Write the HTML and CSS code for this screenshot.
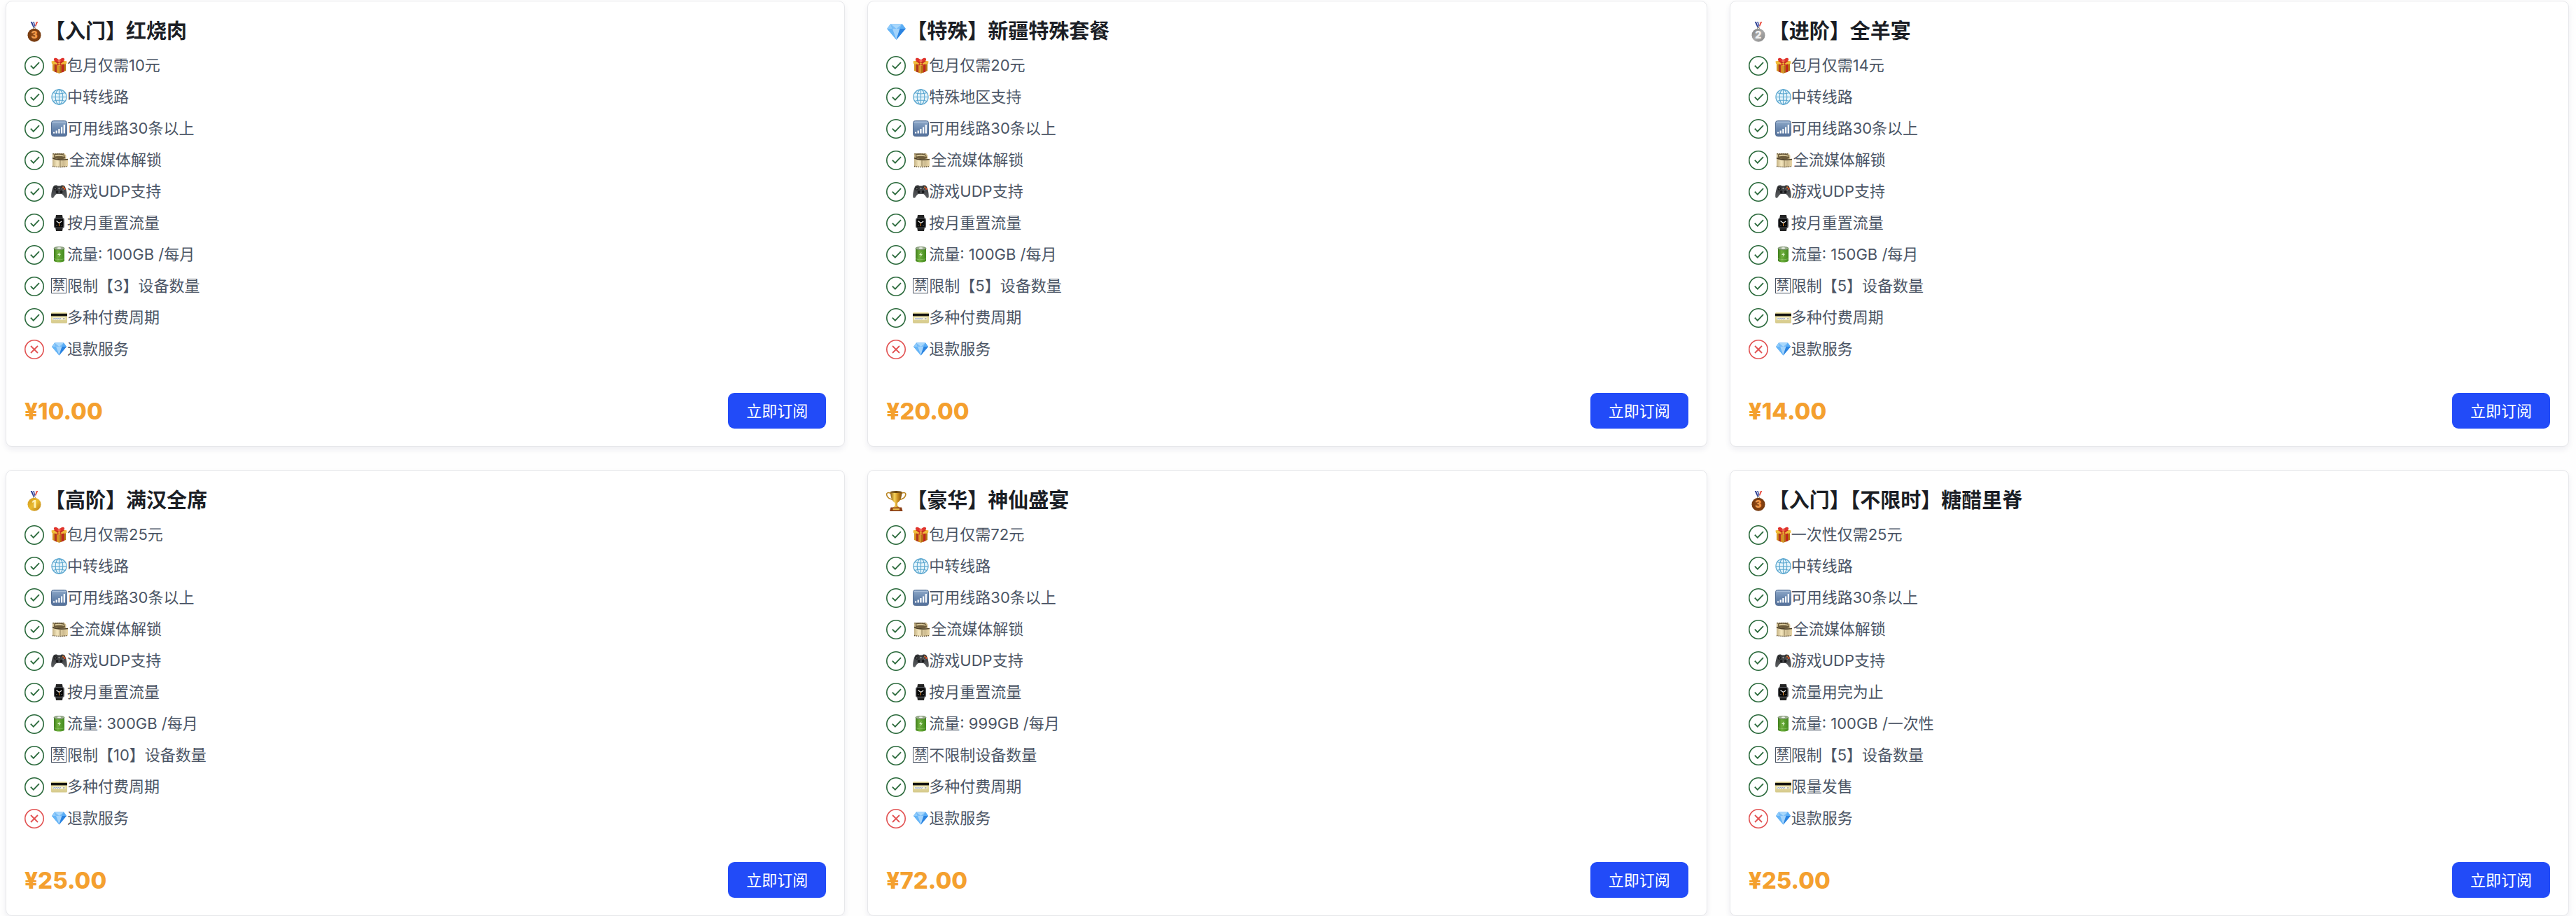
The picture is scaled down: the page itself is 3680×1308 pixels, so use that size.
FILE: index.html
```
<!DOCTYPE html>
<html lang="zh-CN">
<head>
<meta charset="utf-8">
<meta name="viewport" content="width=device-width, initial-scale=1">
<title>订阅套餐</title>
<link rel="stylesheet" href="styles.css">
</head>
<body>
<svg class="sprite" aria-hidden="true">
  <defs>
    <linearGradient id="g-red" x2="1"><stop offset="0" stop-color="#a3341d"/><stop offset=".5" stop-color="#d63a2a"/><stop offset="1" stop-color="#b81f1c"/></linearGradient>
    <linearGradient id="g-signal" x2="0" y2="1"><stop offset="0" stop-color="#8fa9c9"/><stop offset=".5" stop-color="#6b89b0"/><stop offset="1" stop-color="#54709a"/></linearGradient>
    <linearGradient id="g-film" x2="1"><stop offset="0" stop-color="#c3b184"/><stop offset=".3" stop-color="#f4e6bd"/><stop offset=".7" stop-color="#cdbb90"/><stop offset="1" stop-color="#e9d6a7"/></linearGradient>
    <linearGradient id="g-pad" x2="0" y2="1"><stop offset="0" stop-color="#2f3133"/><stop offset="1" stop-color="#5d6063"/></linearGradient>
    <linearGradient id="g-battery" x2="1"><stop offset="0" stop-color="#3f7d1c"/><stop offset=".35" stop-color="#6fb03d"/><stop offset="1" stop-color="#438a1e"/></linearGradient>
    <linearGradient id="g-card" x2="0" y2="1"><stop offset="0" stop-color="#f1e7a8"/><stop offset="1" stop-color="#d5c98c"/></linearGradient>
    <linearGradient id="g-cup" x2="1"><stop offset="0" stop-color="#8a5a12"/><stop offset=".35" stop-color="#f6d35a"/><stop offset=".65" stop-color="#c98d1f"/><stop offset="1" stop-color="#7b4d10"/></linearGradient>
    <radialGradient id="g-bronze"><stop offset="0" stop-color="#9b4f16"/><stop offset="1" stop-color="#74390f"/></radialGradient>
    <linearGradient id="g-silver" x2="1" y2="1"><stop offset="0" stop-color="#7d7d7d"/><stop offset=".5" stop-color="#a9a9a9"/><stop offset="1" stop-color="#858585"/></linearGradient>
    <linearGradient id="g-gold" x2="1" y2="1"><stop offset="0" stop-color="#cf9418"/><stop offset=".5" stop-color="#e9bb30"/><stop offset="1" stop-color="#b97c12"/></linearGradient>
  </defs>
  <symbol id="yes" viewBox="0 0 28 28"><g fill="none" stroke="currentColor"><circle cx="14" cy="14" r="13.200" stroke-width="1.600"/><path d="M8.800 13.600l4 4 8.200-8.400" stroke-width="1.800"/></g></symbol>
  <symbol id="no" viewBox="0 0 28 28"><g fill="none" stroke="currentColor"><circle cx="14" cy="14" r="13.200" stroke-width="1.600"/><path d="M9 9l10 10M19 9L9 19" stroke-width="1.800"/></g></symbol>
  <symbol id="gift" viewBox="0 0 23 23"><path d="M2 8l9.500 3v12L2 19z" fill="#d9971f"/><path d="M21 8l-9.500 3v12L21 19z" fill="#b87412"/><path d="M.5 5.500L11 3l11.500 2.500-.4 3.500-10.600 3L1 9z" fill="#f0bb3a"/><path d="M4.800 9.500l3.400 1v11.200l-3.400-1.300zM18.200 9.500l-3.400 1v11.200l3.400-1.300z" fill="url(#g-red)"/><path d="M4 5l9 6.500 2.600-.8L7 4zM19 5l-9 6.500-2.600-.8L16 4z" fill="#c72b22"/><path d="M11.500 4.500C9 0 5 0 4 2c-.8 2 2 4.500 7.500 3.500C17 6.500 19.800 4 19 2c-1-2-5-2-7.500 2.500z" fill="#e0332c"/><circle cx="11.500" cy="4.300" r="1.900" fill="#f0645a"/></symbol>
  <symbol id="globe" viewBox="0 0 23 23"><circle cx="11.500" cy="11.500" r="10.700" fill="#e4f4fb"/><g fill="none" stroke="#5aa6cf" stroke-width="1.100"><circle cx="11.500" cy="11.500" r="10.600"/><ellipse cx="11.500" cy="11.500" rx="5.300" ry="10.600"/><path d="M11.500 1v21M1 11.500h21M3 5.500c5 1.700 12 1.700 17 0M3 17.500c5-1.700 12-1.700 17 0"/></g></symbol>
  <symbol id="signal" viewBox="0 0 23 23"><rect x=".5" y=".5" width="22" height="22" rx="3" fill="url(#g-signal)" stroke="#536d92"/><path d="M1.500 2.500h20" stroke="#b7cbe2" opacity=".7"/><path d="M3 18.500v-2h2.200v2zM6.600 18.500v-4h2.200v4zM10.300 18.500v-6.500h2.200v6.500zM14 18.500v-9h2.200v9zM17.700 18.500V6h2.200v12.500z" fill="#fff"/></symbol>
  <symbol id="film" viewBox="0 0 26 23"><path d="M2 2h17l2.500 3v6H24v9.500c-6 1.500-16 1.500-22 0z" fill="url(#g-film)"/><path d="M4 3.500c4-2 13-1.500 15 1l1.500 4.500c-5 2-13 1.500-16.500-1z" fill="#6d5c3b"/><path d="M5 4.500c4-1.400 10-1 13 .6l.8 1.600C14 5.500 9 5.500 5.500 6.500z" fill="#d8c798"/><path d="M2 8.500c5 3 14 3 22 2" stroke="#4e4029" stroke-width="1.600" fill="none"/><path d="M2.500 2.700h16M2 20.500c7 1.300 15 1.300 22 0" stroke="#594a2e" stroke-width="1.400" stroke-dasharray="1.400 1.400" fill="none"/><path d="M13 11.500v9" stroke="#8a7850"/></symbol>
  <symbol id="gamepad" viewBox="0 0 23 23"><path d="M4.500 3c2-1 4-.5 5 .5h4c1-1 3-1.500 5-.5 2 .8 4.500 9.500 4.300 15.500 0 2.500-2.300 3-3.500 1.200C17.500 17 16 15 14.500 15h-6c-1.500 0-3 2-4.800 4.700C2.500 21.500.2 21 .2 18.500 0 13 2.500 3.800 4.500 3z" fill="url(#g-pad)"/><g fill="#17181a"><circle cx="5.800" cy="7.500" r="2.200"/><circle cx="14.600" cy="12" r="1.900"/><circle cx="8.600" cy="12" r="1.900"/></g><circle cx="5.800" cy="7.500" r="1" fill="#777"/><circle cx="11.500" cy="7" r="1.200" fill="#999"/><circle cx="17.200" cy="5.500" r="1.200" fill="#d0742d"/><circle cx="19.300" cy="7.600" r="1.300" fill="#ee4a22"/><circle cx="15.300" cy="7.600" r=".9" fill="#777"/><circle cx="17.200" cy="9.500" r=".9" fill="#777"/></symbol>
  <symbol id="watch" viewBox="0 0 23 23"><path d="M7 0h9l1 6H6zM6 17h11l-1 6H7z" fill="#242424"/><rect x="4" y="4" width="15" height="15" rx="3.200" fill="#54565a"/><rect x="5.300" y="5.200" width="12" height="12.600" rx="1.800" fill="#080808"/><path d="M7.500 8.500l4 3 3.700-2.500" fill="none" stroke="#f3f3f3" stroke-width="1.200"/><path d="M11.500 11.500V16" stroke="#e88a25"/><path d="M7.500 14.500h.9M14.600 14.500h.9" stroke="#999"/></symbol>
  <symbol id="battery" viewBox="0 0 23 23"><path d="M4 2.500v18c2 2.700 13 2.700 15 0v-18z" fill="url(#g-battery)"/><ellipse cx="11.500" cy="2.600" rx="7.500" ry="2.200" fill="#9fb193" stroke="#5d7a4d" stroke-width=".7"/><ellipse cx="11.500" cy="2.200" rx="2.700" ry="1" fill="#f0f3ee"/><path d="M12.500 8l-3.500 4h2.400l-.7 3 3.400-4.200h-2.300z" fill="#d9f0c4"/><path d="M4.500 17.500c3 1.500 11 1.500 14 0" fill="none" stroke="#9ccc78" stroke-dasharray="1 1"/></symbol>
  <symbol id="credit" viewBox="0 0 23 23"><rect y="4" width="23" height="15.500" rx="1.500" fill="url(#g-card)"/><path d="M0 5.800h23v3.600H0z" fill="#151411"/><path d="M2 11.300h18.500v3.400H2z" fill="#f4f2df"/><path d="M3 13.500l1.500-1 1.500 1 1.500-1 1.500 1 1.500-1 1.500 1 2-1" fill="none" stroke="#6c86cc" stroke-width=".9"/><path d="M17 13h2.500" stroke="#777"/></symbol>
  <symbol id="gem" viewBox="0 0 23 23"><path d="M5 2.500h13l4 5.500-10.500 12.500L1 8z" fill="#4ba3f2"/><path d="M5 2.500L1 8h6z" fill="#8fcbfa"/><path d="M5 2.500h13L15.500 8H7z" fill="#79bdf8"/><path d="M5 2.500L11.500 8 18 2.500z" fill="#a9d8fc"/><path d="M18 2.500L22 8h-6.500z" fill="#5baef5"/><path d="M1 8h6l4.500 12.500z" fill="#66b5f7"/><path d="M7 8h8.500l-4 12.500z" fill="#a3d3fb"/><path d="M15.500 8H22L11.500 20.500z" fill="#2b83e0"/></symbol>
  <symbol id="ribbon" viewBox="0 0 29 29"><path d="M19.300 0h-4.600l-3 8.500h3.600z" fill="#fff"/><path d="M19.300 0h-2.200l-3.300 8.500h1.600z" fill="#e8483a"/><path d="M15.900 0h-1.400l-1.700 5 .8 1.500z" fill="#dfe3ee"/><path d="M8.700 0h4.600l3 8.500h-3.600z" fill="#fff"/><path d="M8.700 0h2.200l3.300 8.500h-1.600z" fill="#24388f"/><path d="M12 0h1.500l2 6-.9 1.500z" fill="#33479e"/><circle cx="14" cy="9.700" r="1.500" fill="none" stroke="#8c8473"/></symbol>
  <symbol id="bronze" viewBox="0 0 29 29"><use href="#ribbon"/><circle cx="14" cy="19.200" r="9.500" fill="url(#g-bronze)"/></symbol>
  <symbol id="silver" viewBox="0 0 29 29"><use href="#ribbon"/><circle cx="14" cy="19.200" r="9.500" fill="url(#g-silver)"/></symbol>
  <symbol id="gold" viewBox="0 0 29 29"><use href="#ribbon"/><circle cx="14" cy="19.200" r="9.500" fill="url(#g-gold)"/></symbol>
  <symbol id="trophy" viewBox="0 0 29 29"><path d="M7 3.500C2 1.500 0 3 .8 6c.8 3.500 4 5.500 8.500 6.500M21.500 3.500c5-2 7-.5 6.200 2.500-.8 3.500-4 5.500-8.500 6.500" fill="none" stroke="#b9831d" stroke-width="1.500"/><path d="M6 1h16.500c0 8-2.500 14-6.500 16v4l3 3H9.500l3-3v-4C8.500 15 6 9 6 1z" fill="url(#g-cup)"/><ellipse cx="14.200" cy="1.500" rx="8.200" ry="1.400" fill="#68450f"/><path d="M6.500 23.500h15.500l1.500 5.500H5z" fill="#8c3f17"/><path d="M9.500 25h9.500v2.300H9.500z" fill="#e9bd4c"/></symbol>
</svg>

<main class="plans">
  <article class="plan">
    <h2 class="plan-title"><span class="badge bronze"><svg><use href="#bronze"/></svg><b>3</b></span>【入门】红烧肉</h2>
    <ul class="features">
      <li><svg class="mark"><use href="#yes"/></svg><span><svg class="emoji"><use href="#gift"/></svg>包月仅需10元</span></li>
      <li><svg class="mark"><use href="#yes"/></svg><span><svg class="emoji"><use href="#globe"/></svg>中转线路</span></li>
      <li><svg class="mark"><use href="#yes"/></svg><span><svg class="emoji"><use href="#signal"/></svg>可用线路30条以上</span></li>
      <li><svg class="mark"><use href="#yes"/></svg><span><svg class="emoji wide"><use href="#film"/></svg>全流媒体解锁</span></li>
      <li><svg class="mark"><use href="#yes"/></svg><span><svg class="emoji"><use href="#gamepad"/></svg>游戏UDP支持</span></li>
      <li><svg class="mark"><use href="#yes"/></svg><span><svg class="emoji"><use href="#watch"/></svg>按月重置流量</span></li>
      <li><svg class="mark"><use href="#yes"/></svg><span><svg class="emoji"><use href="#battery"/></svg>流量: 100GB /每月</span></li>
      <li><svg class="mark"><use href="#yes"/></svg><span><b class="boxed">禁</b>限制【3】设备数量</span></li>
      <li><svg class="mark"><use href="#yes"/></svg><span><svg class="emoji"><use href="#credit"/></svg>多种付费周期</span></li>
      <li><svg class="mark off"><use href="#no"/></svg><span><svg class="emoji"><use href="#gem"/></svg>退款服务</span></li>
    </ul>
    <footer class="plan-footer"><strong class="price">¥10.00</strong><button class="subscribe" type="button">立即订阅</button></footer>
  </article>

  <article class="plan">
    <h2 class="plan-title"><span class="badge"><svg><use href="#gem"/></svg></span>【特殊】新疆特殊套餐</h2>
    <ul class="features">
      <li><svg class="mark"><use href="#yes"/></svg><span><svg class="emoji"><use href="#gift"/></svg>包月仅需20元</span></li>
      <li><svg class="mark"><use href="#yes"/></svg><span><svg class="emoji"><use href="#globe"/></svg>特殊地区支持</span></li>
      <li><svg class="mark"><use href="#yes"/></svg><span><svg class="emoji"><use href="#signal"/></svg>可用线路30条以上</span></li>
      <li><svg class="mark"><use href="#yes"/></svg><span><svg class="emoji wide"><use href="#film"/></svg>全流媒体解锁</span></li>
      <li><svg class="mark"><use href="#yes"/></svg><span><svg class="emoji"><use href="#gamepad"/></svg>游戏UDP支持</span></li>
      <li><svg class="mark"><use href="#yes"/></svg><span><svg class="emoji"><use href="#watch"/></svg>按月重置流量</span></li>
      <li><svg class="mark"><use href="#yes"/></svg><span><svg class="emoji"><use href="#battery"/></svg>流量: 100GB /每月</span></li>
      <li><svg class="mark"><use href="#yes"/></svg><span><b class="boxed">禁</b>限制【5】设备数量</span></li>
      <li><svg class="mark"><use href="#yes"/></svg><span><svg class="emoji"><use href="#credit"/></svg>多种付费周期</span></li>
      <li><svg class="mark off"><use href="#no"/></svg><span><svg class="emoji"><use href="#gem"/></svg>退款服务</span></li>
    </ul>
    <footer class="plan-footer"><strong class="price">¥20.00</strong><button class="subscribe" type="button">立即订阅</button></footer>
  </article>

  <article class="plan">
    <h2 class="plan-title"><span class="badge silver"><svg><use href="#silver"/></svg><b>2</b></span>【进阶】全羊宴</h2>
    <ul class="features">
      <li><svg class="mark"><use href="#yes"/></svg><span><svg class="emoji"><use href="#gift"/></svg>包月仅需14元</span></li>
      <li><svg class="mark"><use href="#yes"/></svg><span><svg class="emoji"><use href="#globe"/></svg>中转线路</span></li>
      <li><svg class="mark"><use href="#yes"/></svg><span><svg class="emoji"><use href="#signal"/></svg>可用线路30条以上</span></li>
      <li><svg class="mark"><use href="#yes"/></svg><span><svg class="emoji wide"><use href="#film"/></svg>全流媒体解锁</span></li>
      <li><svg class="mark"><use href="#yes"/></svg><span><svg class="emoji"><use href="#gamepad"/></svg>游戏UDP支持</span></li>
      <li><svg class="mark"><use href="#yes"/></svg><span><svg class="emoji"><use href="#watch"/></svg>按月重置流量</span></li>
      <li><svg class="mark"><use href="#yes"/></svg><span><svg class="emoji"><use href="#battery"/></svg>流量: 150GB /每月</span></li>
      <li><svg class="mark"><use href="#yes"/></svg><span><b class="boxed">禁</b>限制【5】设备数量</span></li>
      <li><svg class="mark"><use href="#yes"/></svg><span><svg class="emoji"><use href="#credit"/></svg>多种付费周期</span></li>
      <li><svg class="mark off"><use href="#no"/></svg><span><svg class="emoji"><use href="#gem"/></svg>退款服务</span></li>
    </ul>
    <footer class="plan-footer"><strong class="price">¥14.00</strong><button class="subscribe" type="button">立即订阅</button></footer>
  </article>

  <article class="plan">
    <h2 class="plan-title"><span class="badge gold"><svg><use href="#gold"/></svg><b>1</b></span>【高阶】满汉全席</h2>
    <ul class="features">
      <li><svg class="mark"><use href="#yes"/></svg><span><svg class="emoji"><use href="#gift"/></svg>包月仅需25元</span></li>
      <li><svg class="mark"><use href="#yes"/></svg><span><svg class="emoji"><use href="#globe"/></svg>中转线路</span></li>
      <li><svg class="mark"><use href="#yes"/></svg><span><svg class="emoji"><use href="#signal"/></svg>可用线路30条以上</span></li>
      <li><svg class="mark"><use href="#yes"/></svg><span><svg class="emoji wide"><use href="#film"/></svg>全流媒体解锁</span></li>
      <li><svg class="mark"><use href="#yes"/></svg><span><svg class="emoji"><use href="#gamepad"/></svg>游戏UDP支持</span></li>
      <li><svg class="mark"><use href="#yes"/></svg><span><svg class="emoji"><use href="#watch"/></svg>按月重置流量</span></li>
      <li><svg class="mark"><use href="#yes"/></svg><span><svg class="emoji"><use href="#battery"/></svg>流量: 300GB /每月</span></li>
      <li><svg class="mark"><use href="#yes"/></svg><span><b class="boxed">禁</b>限制【10】设备数量</span></li>
      <li><svg class="mark"><use href="#yes"/></svg><span><svg class="emoji"><use href="#credit"/></svg>多种付费周期</span></li>
      <li><svg class="mark off"><use href="#no"/></svg><span><svg class="emoji"><use href="#gem"/></svg>退款服务</span></li>
    </ul>
    <footer class="plan-footer"><strong class="price">¥25.00</strong><button class="subscribe" type="button">立即订阅</button></footer>
  </article>

  <article class="plan">
    <h2 class="plan-title"><span class="badge"><svg><use href="#trophy"/></svg></span>【豪华】神仙盛宴</h2>
    <ul class="features">
      <li><svg class="mark"><use href="#yes"/></svg><span><svg class="emoji"><use href="#gift"/></svg>包月仅需72元</span></li>
      <li><svg class="mark"><use href="#yes"/></svg><span><svg class="emoji"><use href="#globe"/></svg>中转线路</span></li>
      <li><svg class="mark"><use href="#yes"/></svg><span><svg class="emoji"><use href="#signal"/></svg>可用线路30条以上</span></li>
      <li><svg class="mark"><use href="#yes"/></svg><span><svg class="emoji wide"><use href="#film"/></svg>全流媒体解锁</span></li>
      <li><svg class="mark"><use href="#yes"/></svg><span><svg class="emoji"><use href="#gamepad"/></svg>游戏UDP支持</span></li>
      <li><svg class="mark"><use href="#yes"/></svg><span><svg class="emoji"><use href="#watch"/></svg>按月重置流量</span></li>
      <li><svg class="mark"><use href="#yes"/></svg><span><svg class="emoji"><use href="#battery"/></svg>流量: 999GB /每月</span></li>
      <li><svg class="mark"><use href="#yes"/></svg><span><b class="boxed">禁</b>不限制设备数量</span></li>
      <li><svg class="mark"><use href="#yes"/></svg><span><svg class="emoji"><use href="#credit"/></svg>多种付费周期</span></li>
      <li><svg class="mark off"><use href="#no"/></svg><span><svg class="emoji"><use href="#gem"/></svg>退款服务</span></li>
    </ul>
    <footer class="plan-footer"><strong class="price">¥72.00</strong><button class="subscribe" type="button">立即订阅</button></footer>
  </article>

  <article class="plan">
    <h2 class="plan-title"><span class="badge bronze"><svg><use href="#bronze"/></svg><b>3</b></span>【入门】【不限时】糖醋里脊</h2>
    <ul class="features">
      <li><svg class="mark"><use href="#yes"/></svg><span><svg class="emoji"><use href="#gift"/></svg>一次性仅需25元</span></li>
      <li><svg class="mark"><use href="#yes"/></svg><span><svg class="emoji"><use href="#globe"/></svg>中转线路</span></li>
      <li><svg class="mark"><use href="#yes"/></svg><span><svg class="emoji"><use href="#signal"/></svg>可用线路30条以上</span></li>
      <li><svg class="mark"><use href="#yes"/></svg><span><svg class="emoji wide"><use href="#film"/></svg>全流媒体解锁</span></li>
      <li><svg class="mark"><use href="#yes"/></svg><span><svg class="emoji"><use href="#gamepad"/></svg>游戏UDP支持</span></li>
      <li><svg class="mark"><use href="#yes"/></svg><span><svg class="emoji"><use href="#watch"/></svg>流量用完为止</span></li>
      <li><svg class="mark"><use href="#yes"/></svg><span><svg class="emoji"><use href="#battery"/></svg>流量: 100GB /一次性</span></li>
      <li><svg class="mark"><use href="#yes"/></svg><span><b class="boxed">禁</b>限制【5】设备数量</span></li>
      <li><svg class="mark"><use href="#yes"/></svg><span><svg class="emoji"><use href="#credit"/></svg>限量发售</span></li>
      <li><svg class="mark off"><use href="#no"/></svg><span><svg class="emoji"><use href="#gem"/></svg>退款服务</span></li>
    </ul>
    <footer class="plan-footer"><strong class="price">¥25.00</strong><button class="subscribe" type="button">立即订阅</button></footer>
  </article>
</main>
</body>
</html>
```
FILE: styles.css
```
* {
  box-sizing: border-box;
}

body {
  margin: 0;
  background: #fefefe;
  color: #4b5565;
  font-family: Inter, "Noto Sans CJK SC", sans-serif;
  font-size: 22px;
  line-height: 28px;
}

.sprite {
  position: absolute;
  width: 0;
  height: 0;
}

.plans {
  display: grid;
  grid-template-columns: repeat(3, minmax(0, 1fr));
  gap: 33px 32px;
  padding: 1px 10px 0 8px;
}

.plan {
  display: flex;
  flex-direction: column;
  padding: 26px 26px 25px;
  border: 1px solid #e6e7ea;
  border-radius: 9px;
  background: #fff;
  box-shadow: 0 4px 8px rgba(30, 35, 90, 0.07);
}

.plan-title {
  display: flex;
  align-items: center;
  margin: 0 0 18px;
  color: #1b1e25;
  font-size: 29px;
  font-weight: 600;
  line-height: 34px;
}

/* The medal's digit shares the grid cell of its drawing. */
.badge {
  display: grid;
  flex: none;
  grid-template: 29px / 29px;
}

.badge svg {
  grid-area: 1 / 1;
  width: 29px;
  height: 29px;
}

.badge b {
  grid-area: 1 / 1;
  align-self: end;
  width: 28px;
  font-size: 14px;
  line-height: 20px;
  text-align: center;
}

.bronze b {
  color: #f0994a;
}

.silver b {
  color: #f1f1f1;
}

.gold b {
  color: #fff1b0;
}

.features {
  display: grid;
  gap: 17px;
  margin: 0;
  padding: 0;
  list-style: none;
}

.features li,
.features span {
  display: flex;
  align-items: center;
}

.features li {
  gap: 10px;
}

.features span {
  padding-bottom: 2px;
  line-height: 26px;
  white-space: pre-wrap;
}

.mark {
  flex: none;
  width: 28px;
  height: 28px;
  color: #2b6a3c;
}

.mark.off {
  color: #e25353;
}

.emoji {
  flex: none;
  width: 23px;
  height: 23px;
}

.emoji.wide {
  width: 26px;
}

.boxed {
  display: grid;
  place-items: center;
  width: 22px;
  height: 22px;
  margin-right: 1px;
  border: 1px solid currentColor;
  font-size: 18px;
  font-weight: 400;
  line-height: 18px;
}

.plan-footer {
  display: flex;
  align-items: center;
  justify-content: space-between;
  margin-top: auto;
  padding-top: 48px;
}

.price {
  color: #f4a02f;
  font-size: 33px;
  font-weight: 800;
  line-height: 40px;
}

.subscribe {
  height: 51px;
  padding: 0 26px;
  border: 0;
  border-radius: 9px;
  background: #224bf8;
  color: #fff;
  font: inherit;
  cursor: pointer;
}

@media (max-width: 1400px) {
  .plans {
    grid-template-columns: repeat(2, minmax(0, 1fr));
  }
}

@media (max-width: 800px) {
  .plans {
    grid-template-columns: minmax(0, 1fr);
  }
}
```
